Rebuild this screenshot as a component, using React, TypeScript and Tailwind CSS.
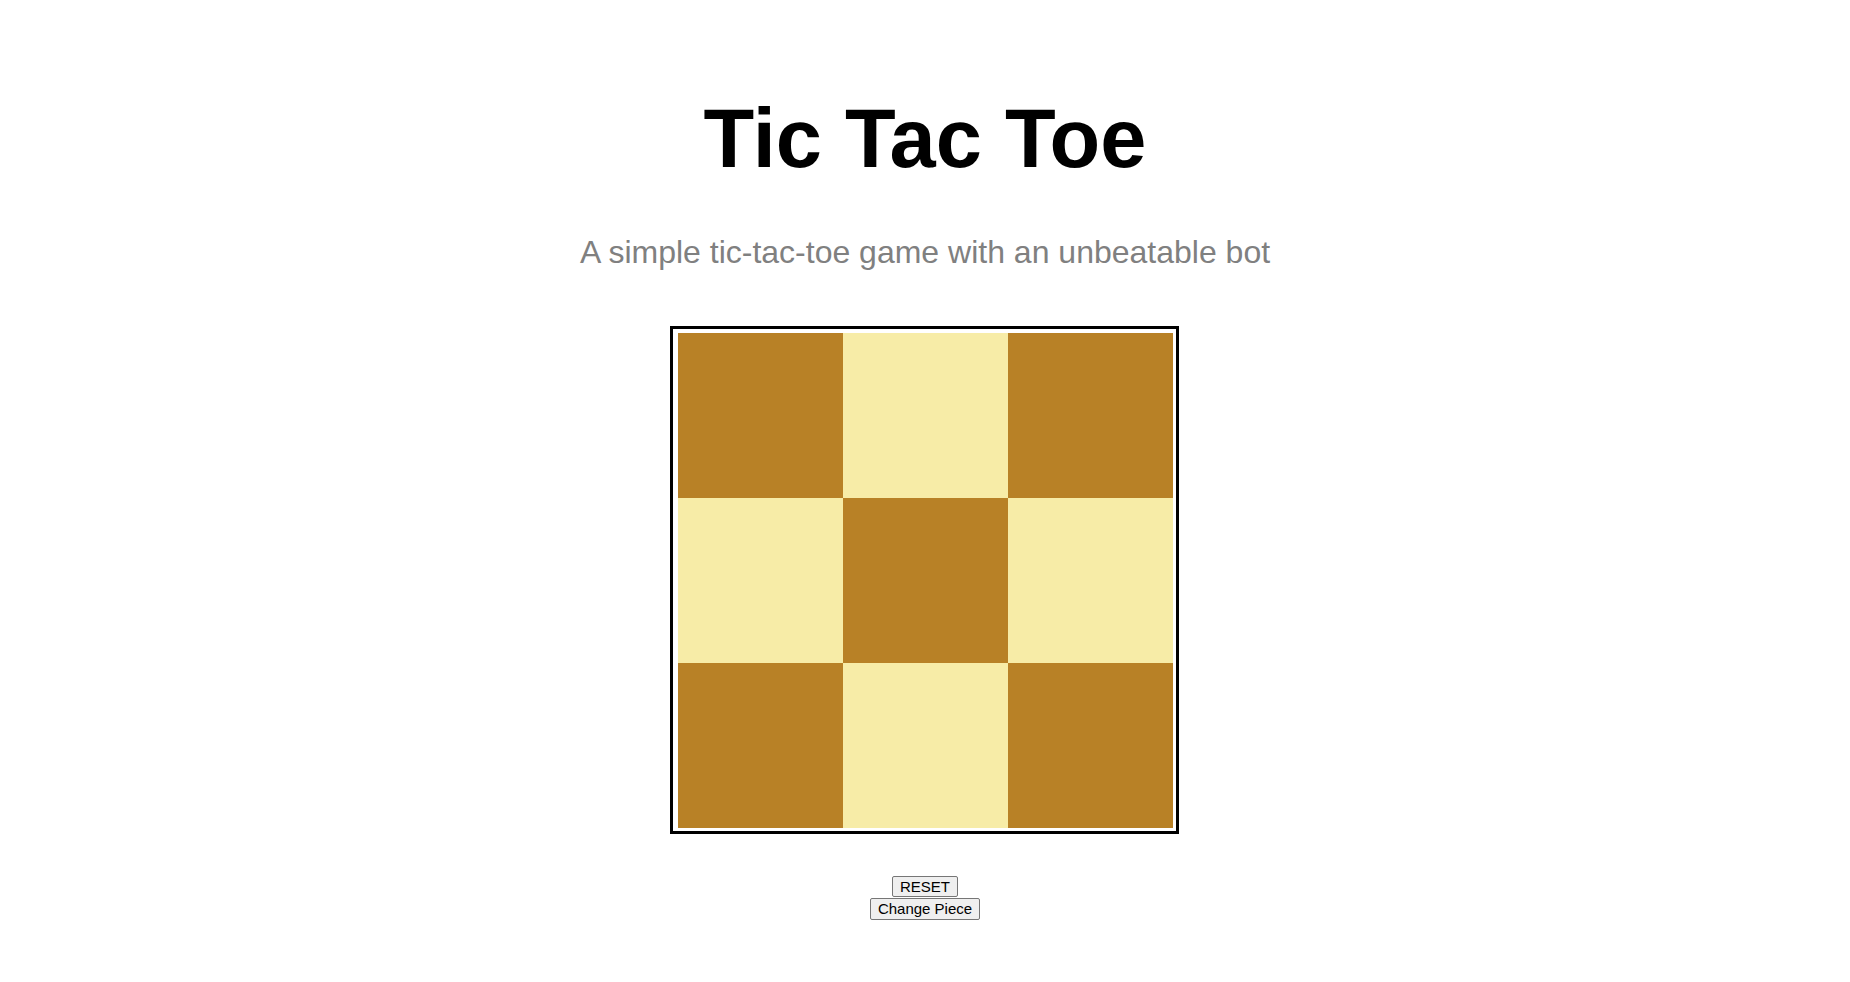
import React from "react";

const DARK = "bg-[#b88126]";
const LIGHT = "bg-[#f7eca7]";

export default function App() {
  const cells = [0, 1, 2, 3, 4, 5, 6, 7, 8];
  return (
    <div className="min-h-screen bg-white flex flex-col items-center" style={{ fontFamily: '"Liberation Sans", Arial, sans-serif' }}>
      <h1 className="mt-[77px] text-[83px] font-bold leading-normal text-black">Tic Tac Toe</h1>
      <p className="mt-[26px] text-[32px] leading-normal text-[#808080]">A simple tic-tac-toe game with an unbeatable bot</p>
      <div className="mt-[50px] mr-[2px] border-[3px] border-black pl-[5px] pt-[4px] pr-[2px] pb-[3px]">
        <div className="grid grid-cols-3 w-[496px] h-[495px]">
          {cells.map((i) => (
            <div key={i} className={i % 2 === 0 ? DARK : LIGHT} />
          ))}
        </div>
      </div>
      <div className="mt-[42px] flex flex-col items-center">
        <button className="bg-[#efefef] border border-[#767676] rounded-[2px] px-[7px] py-[1px] text-[15px] leading-[17px] text-black">RESET</button>
        <button className="mt-[1px] bg-[#efefef] border border-[#767676] rounded-[2px] px-[7px] py-[1px] text-[15px] leading-[18px] text-black">Change Piece</button>
      </div>
    </div>
  );
}
